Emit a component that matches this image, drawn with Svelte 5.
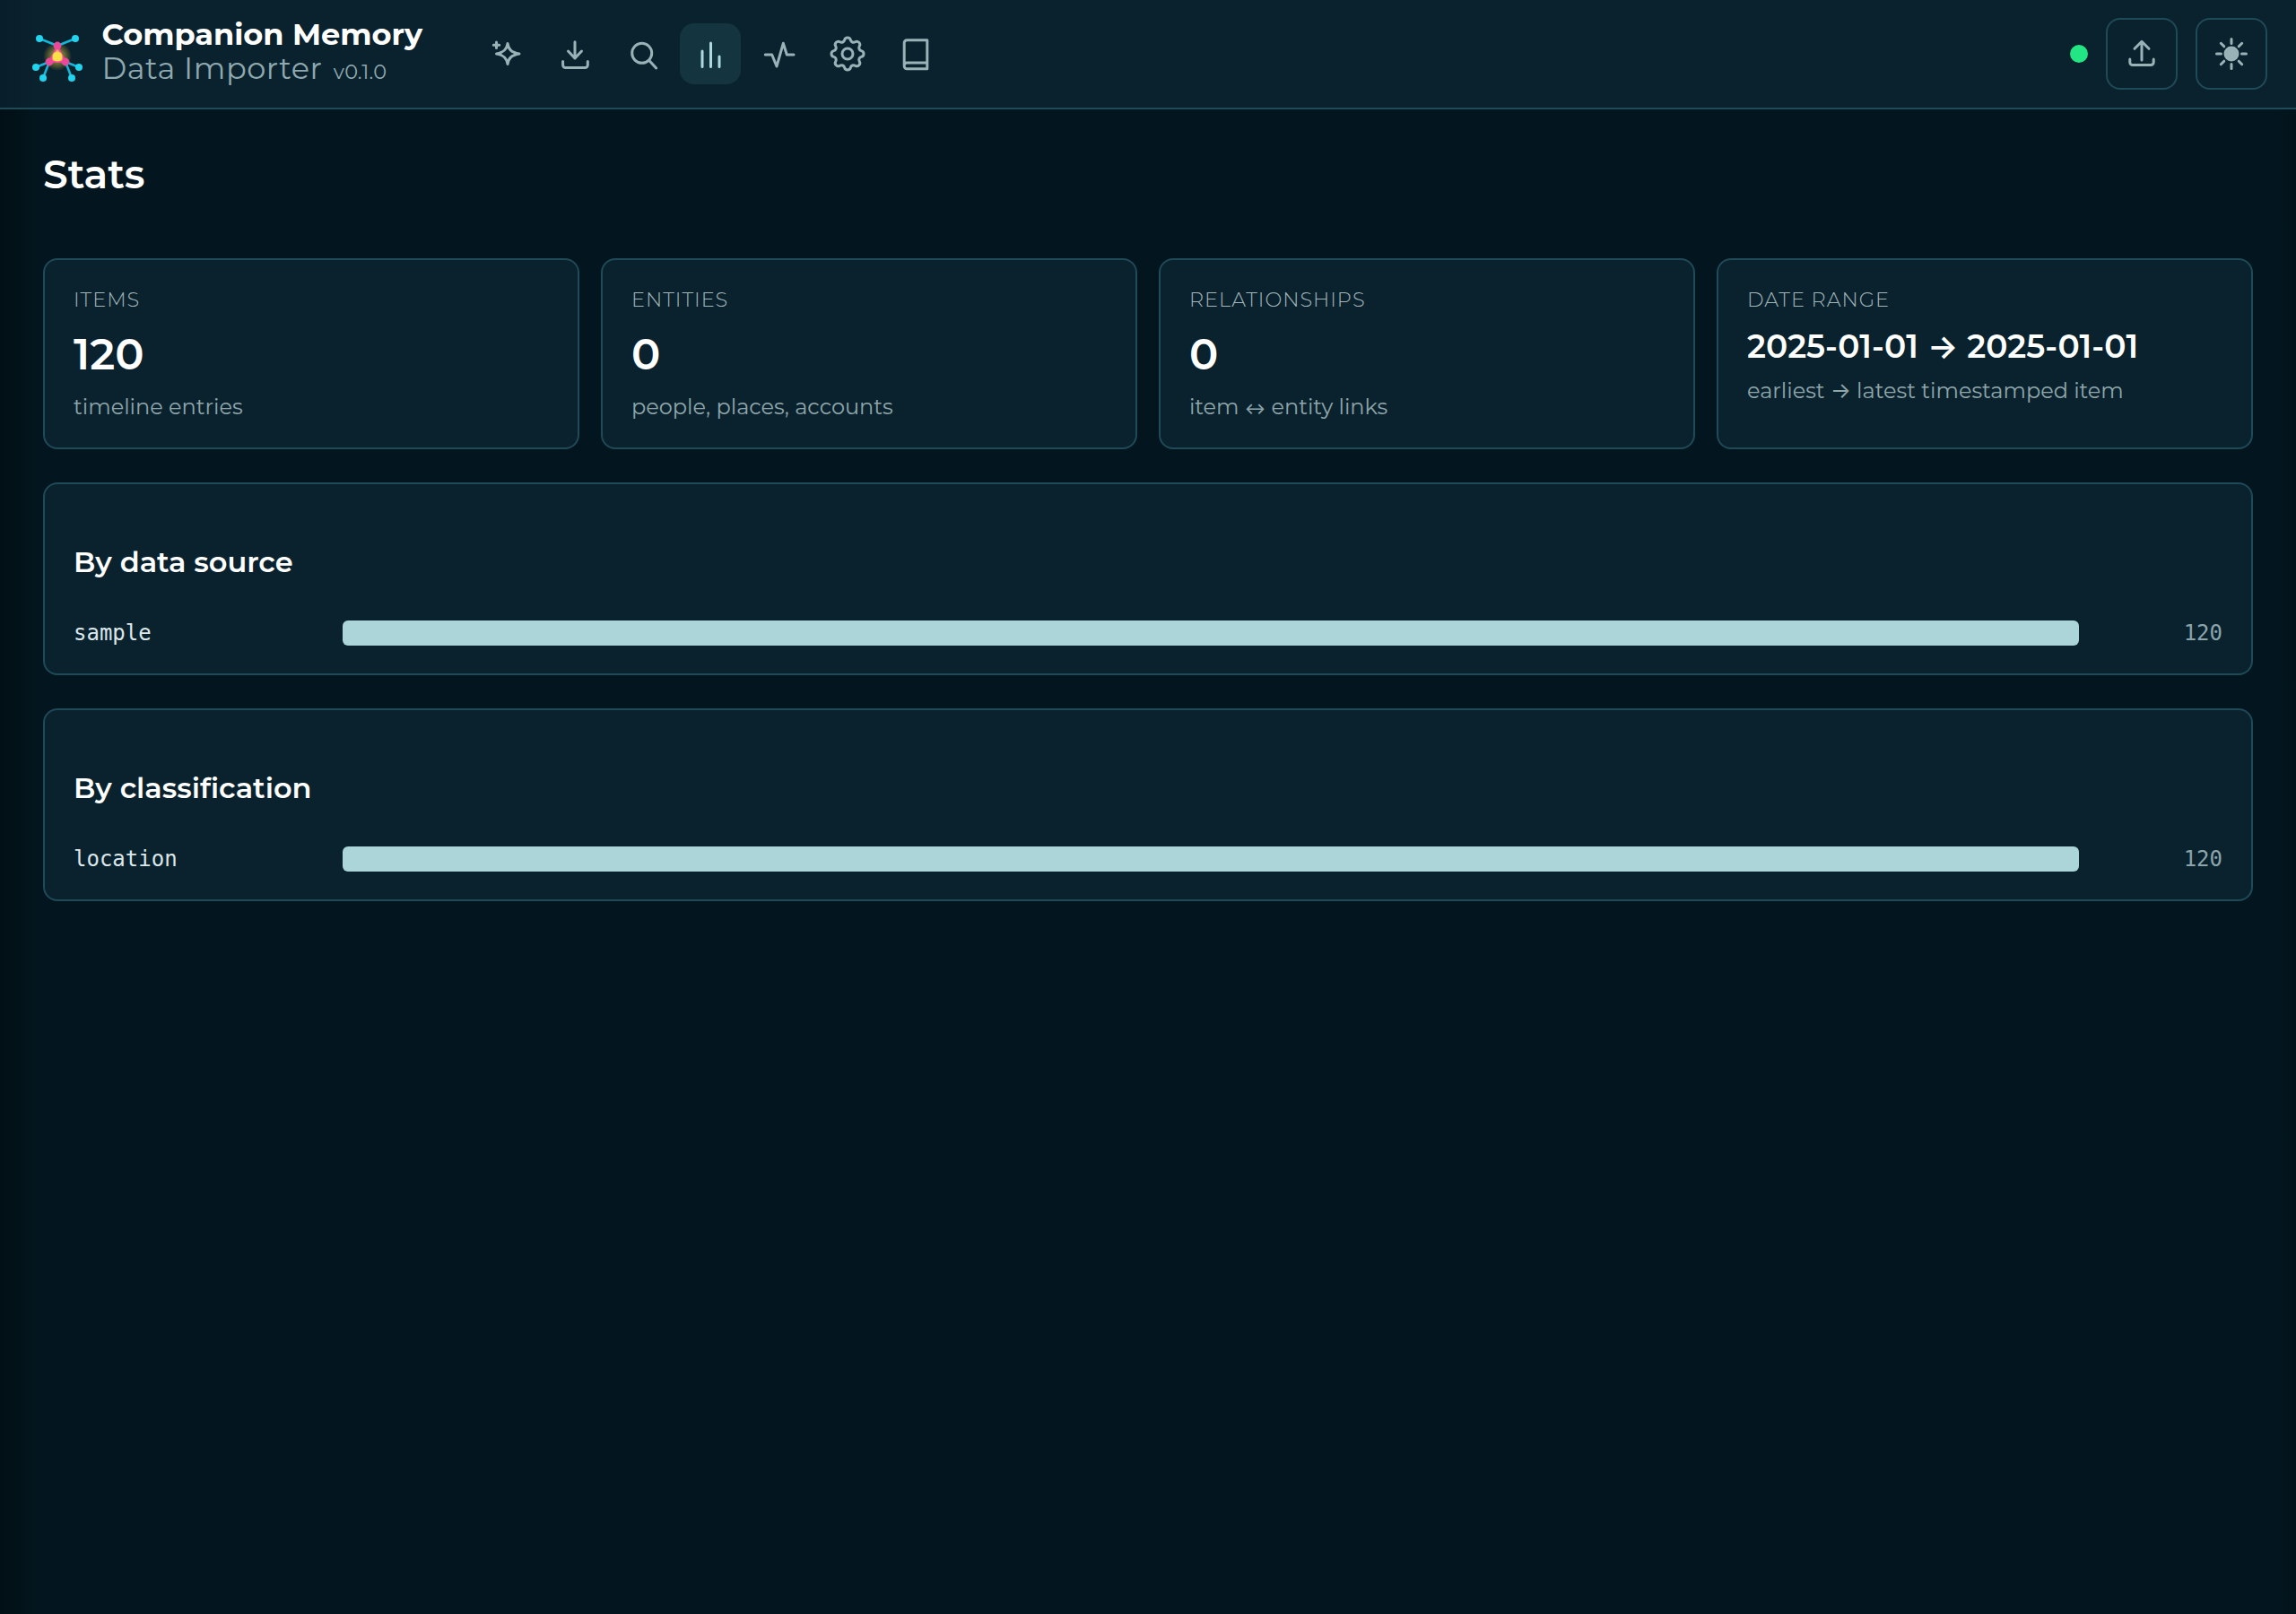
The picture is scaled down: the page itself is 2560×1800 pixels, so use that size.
<script>
  const sources = [{ title: 'By data source', label: 'sample', value: 120 }, { title: 'By classification', label: 'location', value: 120 }];
  const cards = [
    { label: 'ITEMS', value: '120', sub: ['timeline entries'] },
    { label: 'ENTITIES', value: '0', sub: ['people, places, accounts'] },
    { label: 'RELATIONSHIPS', value: '0', sub: ['item ', '↔', ' entity links'] },
    { label: 'DATE RANGE', value: ['2025-01-01 ', '→', ' 2025-01-01'], sub: ['earliest ', '→', ' latest timestamped item'], small: true }
  ];
</script>

<div class="page">
  <header>
    <div class="brand">
      <svg class="logo" width="60" height="60" viewBox="0 0 60 60">
        <defs><radialGradient id="glow"><stop offset="0" stop-color="#ffd93d" stop-opacity=".75"/><stop offset=".55" stop-color="#ffd93d" stop-opacity=".35"/><stop offset="1" stop-color="#ffd93d" stop-opacity="0"/></radialGradient></defs>
        <circle cx="30" cy="32" r="16" fill="url(#glow)"/>
        <g stroke="#12b5d6" stroke-width="2.6" fill="none">
          <path d="M10 12 30 20 50 12M6 44 21 38M54 44 39 38M14 56 21 38M46 56 39 38"/>
        </g>
        <path d="M30 20 21 38H39Z" fill="#f9a06a" stroke="#ec4899" stroke-width="2"/>
        <circle cx="30" cy="32" r="5.500" fill="#fde047"/>
        <g fill="#ec4899"><circle cx="30" cy="20" r="4.400"/><circle cx="21" cy="38" r="4.400"/><circle cx="39" cy="38" r="4.400"/></g>
        <g fill="#22d3ee"><circle cx="10" cy="12" r="4"/><circle cx="50" cy="12" r="4"/><circle cx="6" cy="44" r="4"/><circle cx="54" cy="44" r="4"/><circle cx="14" cy="56" r="4"/><circle cx="46" cy="56" r="4"/></g>
      </svg>
      <div class="titles">
        <div class="t1">Companion Memory</div>
        <div class="t2">Data Importer <span class="ver">v0.1.0</span></div>
      </div>
    </div>
    <nav>
      <button class="nav" aria-label="Assistant"><svg viewBox="0 0 40 40" width="40" height="40"><path d="M21 8.500C22 15 25 18.500 34 20C25 21.500 22 25 21 31.500C20 25 17 21.500 8.500 20C17 18.500 20 15 21 8.500Z"/><path d="M8.500 7V13.500M5.300 10.200H11.700"/></svg></button>
      <button class="nav" aria-label="Import"><svg viewBox="0 0 40 40" width="40" height="40"><path d="M20 6.700V25M12.500 17 20 25 27.500 17M6.600 28.500V32.500A3 3 0 0 0 9.600 35.500H31.300A3 3 0 0 0 34.300 32.500V28.500"/></svg></button>
      <button class="nav" aria-label="Search"><svg viewBox="0 0 40 40" width="40" height="40"><circle cx="18.700" cy="19.300" r="11"/><path d="M26.800 27.500 34.700 36"/></svg></button>
      <button class="nav active" aria-label="Stats"><svg viewBox="0 0 40 40" width="40" height="40"><path d="M11 17V34.500M20.500 8V34.500M30 23V34.500"/></svg></button>
      <button class="nav" aria-label="Activity"><svg viewBox="0 0 40 40" width="40" height="40"><path d="M4.300 21H11.700L17 34 24.300 8.300 28.300 21H36"/></svg></button>
      <button class="nav" aria-label="Settings"><svg viewBox="0 0 24 24" width="48" height="48" class="thin"><path d="M10.325 4.317c.426 -1.756 2.924 -1.756 3.35 0a1.724 1.724 0 0 0 2.573 1.066c1.543 -.94 3.31 .826 2.37 2.37a1.724 1.724 0 0 0 1.065 2.572c1.756 .426 1.756 2.924 0 3.35a1.724 1.724 0 0 0 -1.066 2.573c.94 1.543 -.826 3.31 -2.37 2.37a1.724 1.724 0 0 0 -2.572 1.065c-.426 1.756 -2.924 1.756 -3.35 0a1.724 1.724 0 0 0 -2.573 -1.066c-1.543 .94 -3.31 -.826 -2.37 -2.37a1.724 1.724 0 0 0 -1.065 -2.572c-1.756 -.426 -1.756 -2.924 0 -3.35a1.724 1.724 0 0 0 1.066 -2.573c-.94 -1.543 .826 -3.31 2.37 -2.37c1 .608 2.296 .07 2.572 -1.065z"/><circle cx="12" cy="12" r="3"/></svg></button>
      <button class="nav" aria-label="Docs"><svg viewBox="0 0 40 40" width="40" height="40"><path d="M10.200 4.800H32.800V36.800H10.200A3 3 0 0 1 7.200 33.800V7.800A3 3 0 0 1 10.200 4.800ZM7.200 33A3 3 0 0 1 10.200 30H32.800"/></svg></button>
    </nav>
    <div class="right">
      <span class="dot"></span>
      <button class="square" aria-label="Upload"><svg viewBox="0 0 40 40" width="40" height="40"><path d="M20 7V27M12 14.300 20 6.300 28 14.300M6.800 26V29.500A3 3 0 0 0 9.800 32.500H30.200A3 3 0 0 0 33.200 29.500V26"/></svg></button>
      <button class="square" aria-label="Theme"><svg viewBox="0 0 40 40" width="40" height="40"><circle cx="20" cy="20" r="7" class="solid"/><path d="M20 3.500V8.500M20 31.500V36.500M3.500 20H8.500M31.500 20H36.500M8.300 8.300 11.800 11.800M28.200 28.200 31.700 31.700M8.300 31.700 11.800 28.200M28.200 11.800 31.700 8.300"/></svg></button>
    </div>
  </header>
  <main>
    <h1>Stats</h1>
    <div class="grid">
      {#each cards as c}
        <div class="card">
          <div class="label">{c.label}</div>
          <div class="value" class:small={c.small}>{#if Array.isArray(c.value)}{#each c.value as p}{#if p === '→'}<span class="arrow">{p}</span>{:else}{p}{/if}{/each}{:else}{c.value}{/if}</div>
          <div class="sub" class:tight={c.small}>{#each c.sub as p}{#if p === '→'}<span class="arrow">{p}</span>{:else if p === '↔'}<span class="both">{p}</span>{:else}{p}{/if}{/each}</div>
        </div>
      {/each}
    </div>
    {#each sources as s}
      <section>
        <h2>{s.title}</h2>
        <div class="row">
          <span class="name">{s.label}</span>
          <div class="track"><div class="fill" style="width:{(s.value / 120) * 100}%"></div></div>
          <span class="num">{s.value}</span>
        </div>
      </section>
    {/each}
  </main>
</div>

<style>
  :global(body) { margin: 0; background: #03161f; }
  .page { min-height: 1800px; background: linear-gradient(90deg, #020f16 0, #021219 20px, #03161f 44px, #03161f 2530px, #02131b 2560px); color: #fff; font-family: Montserrat, Inter, "Liberation Sans", sans-serif; }
  header { box-sizing: border-box; height: 122px; display: flex; align-items: center; padding: 0 32px 0 34px; background: linear-gradient(90deg, #081e2a 0, #0a222e 40px); border-bottom: 2px solid #1f4a58; }
  .brand { display: flex; align-items: center; gap: 19.5px; width: 476px; margin-right: 20px; flex: none; }
  .logo { flex: none; margin-top: 2px; }
  .t1 { font-size: 33.6px; font-weight: 700; line-height: 38px; color: #fff; margin-top: -2px; }
  .t2 { font-size: 33.6px; font-weight: 400; line-height: 38px; color: #8fa9b0; letter-spacing: .5px; }
  .ver { font-size: 22.4px; letter-spacing: .1px; margin-left: 3px; }
  nav { display: flex; gap: 8px; }
  button { padding: 0; background: none; color: #98b2b8; display: flex; align-items: center; justify-content: center; cursor: pointer; }
  button svg { fill: none; stroke: currentColor; stroke-width: 3; stroke-linecap: round; stroke-linejoin: round; }
  button svg.thin { stroke-width: 1.5; }
  .solid { fill: currentColor; }
  .nav { width: 68px; height: 68px; border: none; border-radius: 16px; }
  .nav svg { margin-left: 2px; }
  .nav.active svg { margin-left: 0; }
  .nav.active { background: #143440; color: #acd8de; }
  .right { margin-left: auto; display: flex; align-items: center; gap: 20px; }
  .dot { width: 20px; height: 20px; border-radius: 50%; background: #22e584; }
  .square { box-sizing: border-box; width: 80px; height: 80px; border: 2px solid #1f4a58; border-radius: 16px; }
  main { padding: 0 48px; }
  h1 { margin: 0; padding-top: 45px; height: 166px; box-sizing: border-box; font-size: 44px; line-height: 54px; font-weight: 600; }
  .grid { display: grid; grid-template-columns: repeat(4, 1fr); gap: 24px; margin-bottom: 37px; }
  .card, section { box-sizing: border-box; background: #0a222e; border: 2px solid #1f4a58; border-radius: 16px; padding: 32px; }
  .card { height: 213px; padding-top: 30px; }
  .label { font-size: 22.4px; line-height: 28px; letter-spacing: 1px; color: #a3b6ba; font-weight: 300; }
  .value { font-size: 48px; font-weight: 600; line-height: 58px; margin-top: 18px; }
  .value.small { font-size: 36px; line-height: 44px; margin-top: 16px; }
  .sub { font-size: 24px; line-height: 30px; color: #8fa6ab; font-weight: 400; margin-top: 15px; }
  .sub.tight { margin-top: 13px; }
  .arrow { font-family: Inter, sans-serif; }
  .both { font-family: Inter, sans-serif; font-size: 17.5px; font-weight: 500; }
  section { height: 215px; margin-bottom: 37px; }
  h2 { margin: 35px 0 0; font-size: 32px; line-height: 40px; font-weight: 600; }
  .row { display: grid; grid-template-columns: 300px 1fr 160px; align-items: center; margin-top: 45px; }
  .name { font: 24px "DejaVu Sans Mono", monospace; color: #dbe7ea; }
  .track { height: 28px; }
  .fill { height: 100%; background: #acd5d9; border-radius: 6px; }
  .num { font: 24px "DejaVu Sans Mono", monospace; color: #8aa5ab; text-align: right; }
</style>
